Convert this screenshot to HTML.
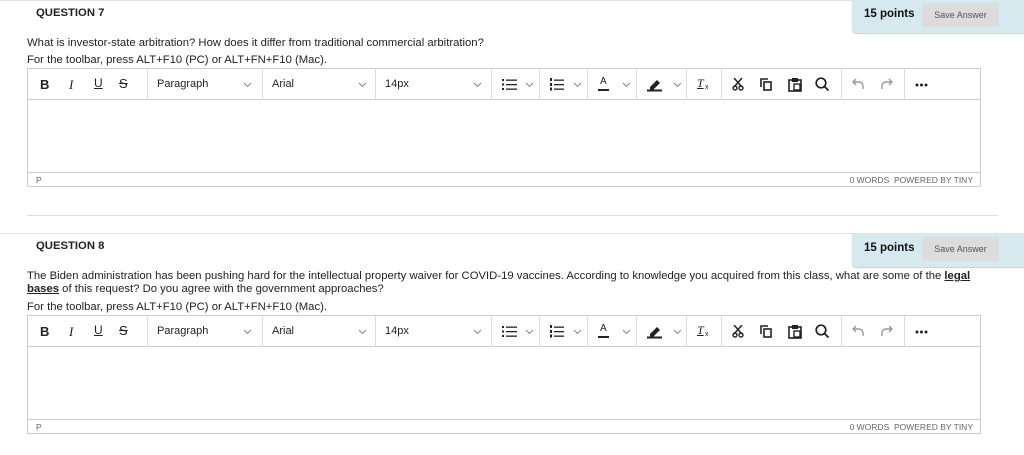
<!DOCTYPE html>
<html><head><meta charset="utf-8"><style>
*{margin:0;padding:0;box-sizing:border-box}
body{width:1024px;height:455px;background:#fff;font-family:"Liberation Sans",sans-serif;color:#262626;position:relative;overflow:hidden}
.a{position:absolute;white-space:nowrap}
.hl{position:absolute;left:0;width:1024px;height:1px;background:#e2e2e2}
.pts{position:absolute;left:852px;width:172px;height:33px;background:#d5e9ef;border-bottom-left-radius:4px;box-shadow:0 1px 1px #ccc}
.pts b{position:absolute;left:12px;top:8px;font-size:11.5px;color:#111}
.pts span{position:absolute;left:70px;top:3px;width:77px;height:24px;background:#dcdcdc;border-radius:2px;font-size:9px;color:#555;text-align:center;line-height:24px}
.q{font-size:11.3px;font-weight:bold;color:#222;left:36px}
.t{font-size:11.3px;color:#222;left:27px}
.ed{position:absolute;left:27px;width:954px;height:119px;border:1px solid #ccc}
.tb{position:absolute;left:0;top:0;width:952px;height:31px;border-bottom:1px solid #ccc}
.sep{position:absolute;top:0;width:1px;height:31px;background:#ddd}
.tb svg{position:absolute}
.tb .lbl{position:absolute;top:9px;font-size:11px;color:#222}
.sb{position:absolute;left:0;top:103px;width:952px;height:14px;border-top:1px solid #ccc;font-size:8.5px;color:#666}
</style></head><body>

<div class="hl" style="top:0"></div>
<div class="pts" style="top:0"><b>15 points</b><span>Save Answer</span></div>
<div class="a q" style="top:7px">QUESTION 7</div>
<div class="a t" style="top:37px">What is investor-state arbitration? How does it differ from traditional commercial arbitration?</div>
<div class="a t" style="top:54px">For the toolbar, press ALT+F10 (PC) or ALT+FN+F10 (Mac).</div>

<div class="ed" style="top:68px" id="e1">
TOOLBAR
<div class="sb"><span style="position:absolute;left:8px;top:2px">P</span><span style="position:absolute;right:7px;top:2px">0 WORDS &nbsp;POWERED BY TINY</span></div>
</div>

<div class="a" style="left:27px;top:215px;width:971px;height:1px;background:#ddd"></div>

<div class="hl" style="top:233px"></div>
<div class="pts" style="top:234px"><b>15 points</b><span>Save Answer</span></div>
<div class="a q" style="top:240px">QUESTION 8</div>
<div class="a t" style="top:270px">The Biden administration has been pushing hard for the intellectual property waiver for COVID-19 vaccines. According to knowledge you acquired from this class, what are some of the <b style="text-decoration:underline">legal</b></div>
<div class="a t" style="top:283px"><b style="text-decoration:underline">bases</b> of this request? Do you agree with the government approaches?</div>
<div class="a t" style="top:301px">For the toolbar, press ALT+F10 (PC) or ALT+FN+F10 (Mac).</div>

<div class="ed" style="top:315px" id="e2">
TOOLBAR
<div class="sb"><span style="position:absolute;left:8px;top:2px">P</span><span style="position:absolute;right:7px;top:2px">0 WORDS &nbsp;POWERED BY TINY</span></div>
</div>

<template id="tpl">
<div class="tb">
<span class="lbl" style="left:12px;font-weight:bold;font-size:13px;top:8px">B</span>
<span class="lbl" style="left:41px;font-style:italic;font-family:'Liberation Serif',serif;font-size:13px;top:8px">I</span>
<span class="lbl" style="left:66px;text-decoration:underline;font-size:12px;top:7px">U</span>
<span class="lbl" style="left:91px;text-decoration:line-through;font-size:13px;top:7px">S</span>
<div class="sep" style="left:119px"></div>
<span class="lbl" style="left:129px">Paragraph</span>
<svg style="left:215px;top:13px" width="9" height="6"><path d="M1 1l3.5 3.5L8 1" fill="none" stroke="#888"/></svg>
<div class="sep" style="left:234px"></div>
<span class="lbl" style="left:244px">Arial</span>
<svg style="left:330px;top:13px" width="9" height="6"><path d="M1 1l3.5 3.5L8 1" fill="none" stroke="#888"/></svg>
<div class="sep" style="left:347px"></div>
<span class="lbl" style="left:357px">14px</span>
<svg style="left:445px;top:13px" width="9" height="6"><path d="M1 1l3.5 3.5L8 1" fill="none" stroke="#888"/></svg>
<div class="sep" style="left:463px"></div>
<svg style="left:474px;top:9px" width="16" height="13"><g fill="#222"><rect x="0" y="1" width="2" height="2"/><rect x="0" y="5.5" width="2" height="2"/><rect x="0" y="10" width="2" height="2"/><rect x="4" y="1.5" width="11" height="1.3"/><rect x="4" y="6" width="11" height="1.3"/><rect x="4" y="10.5" width="11" height="1.3"/></g></svg>
<svg style="left:497px;top:13px" width="9" height="6"><path d="M1 1l3.5 3.5L8 1" fill="none" stroke="#888"/></svg>
<div class="sep" style="left:511px"></div>
<svg style="left:522px;top:9px" width="15" height="13"><g fill="#222"><rect x="0" y="0" width="2" height="3"/><rect x="0" y="5" width="2" height="3"/><rect x="0" y="9.5" width="2" height="3"/><rect x="4" y="1.5" width="10" height="1.3"/><rect x="4" y="6" width="10" height="1.3"/><rect x="4" y="10.5" width="10" height="1.3"/></g></svg>
<svg style="left:545px;top:13px" width="9" height="6"><path d="M1 1l3.5 3.5L8 1" fill="none" stroke="#888"/></svg>
<div class="sep" style="left:559px"></div>
<span class="lbl" style="left:572px;font-size:10px;top:7px">A</span>
<div style="position:absolute;left:570px;top:20px;width:11px;height:2px;background:#222"></div>
<svg style="left:594px;top:13px" width="9" height="6"><path d="M1 1l3.5 3.5L8 1" fill="none" stroke="#888"/></svg>
<div class="sep" style="left:608px"></div>
<svg style="left:619px;top:8px" width="16" height="15"><path d="M3 10l7-7 3 3-7 7H3z" fill="#222"/><rect x="0" y="12.5" width="15" height="2" fill="#222"/></svg>
<svg style="left:645px;top:13px" width="9" height="6"><path d="M1 1l3.5 3.5L8 1" fill="none" stroke="#888"/></svg>
<div class="sep" style="left:658px"></div>
<span class="lbl" style="left:669px;font-style:italic;font-family:'Liberation Serif',serif;font-size:12px;top:7px;text-decoration:underline">T</span><span class="lbl" style="left:677px;font-size:7px;top:15px">x</span>
<div class="sep" style="left:693px"></div>
<svg style="left:704px;top:9px" width="12" height="13"><path d="M2 0l8 9M10 0L2 9" stroke="#222" stroke-width="1.5"/><circle cx="3" cy="10" r="2" fill="none" stroke="#222" stroke-width="1.4"/><circle cx="9" cy="10" r="2" fill="none" stroke="#222" stroke-width="1.4"/></svg>
<svg style="left:732px;top:9px" width="12" height="13"><path d="M1 9V1h7" fill="none" stroke="#222" stroke-width="1.6"/><rect x="4" y="4" width="7" height="8" fill="none" stroke="#222" stroke-width="1.6"/></svg>
<svg style="left:760px;top:8px" width="14" height="15"><rect x="1" y="3" width="12" height="11" fill="none" stroke="#222" stroke-width="1.6"/><rect x="4" y="1" width="6" height="4" fill="#222"/><rect x="6" y="7" width="6" height="6" fill="none" stroke="#222" stroke-width="1.4"/></svg>
<svg style="left:787px;top:8px" width="14" height="15"><circle cx="6" cy="6" r="4.8" fill="none" stroke="#222" stroke-width="1.7"/><path d="M9.5 9.5l4 4" stroke="#222" stroke-width="1.8"/></svg>
<div class="sep" style="left:813px"></div>
<svg style="left:824px;top:9px" width="13" height="12"><path d="M4 1L1 4l3 3M1 4h6a4 4 0 0 1 4 4v3" fill="none" stroke="#999" stroke-width="1.4"/></svg>
<svg style="left:852px;top:9px" width="13" height="12"><path d="M9 1l3 3-3 3M12 4H6a4 4 0 0 0-4 4v3" fill="none" stroke="#999" stroke-width="1.4"/></svg>
<div class="sep" style="left:876px"></div>
<svg style="left:887px;top:14px" width="14" height="4"><g fill="#222"><circle cx="2" cy="2" r="1.5"/><circle cx="6.5" cy="2" r="1.5"/><circle cx="11" cy="2" r="1.5"/></g></svg>
</div>
</template>
<script>
var t=document.getElementById('tpl').innerHTML;
['e1','e2'].forEach(function(id){var e=document.getElementById(id);e.innerHTML=e.innerHTML.replace('TOOLBAR',t);});
</script>
</body></html>
